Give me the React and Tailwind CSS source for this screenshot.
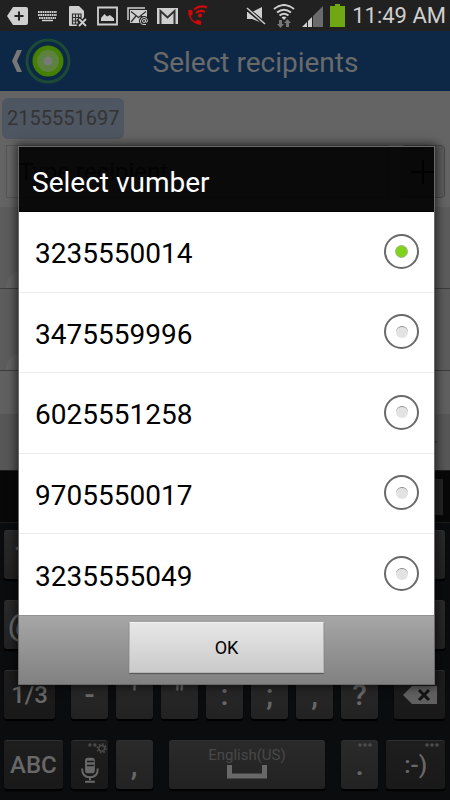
import { useState } from "react";

const numbers = ["3235550014", "3475559996", "6025551258", "9705550017", "3235555049"];

function StatusBar() {
  return (
    <div className="flex h-[31px] shrink-0 items-center justify-between bg-[#212121] pl-[7px] pr-1 text-[#cfcfcf]">
      <div className="flex items-center gap-[9px]">
        <svg className="h-5 w-[21px]" viewBox="0 0 21 20">
          <path d="M0 10 L6 1 H19 Q21 1 21 3 V17 Q21 19 19 19 H6 Z" fill="currentColor" />
          <path d="M12 5.500V14.500M7.500 10H16.500" stroke="#212121" strokeWidth="2" />
        </svg>
        <svg className="h-5 w-[21px]" viewBox="0 0 21 20" stroke="currentColor" strokeWidth="2">
          <path d="M1 6H20M1 9H20" strokeDasharray="1.700 0.600" />
          <path d="M2 12H19" strokeDasharray="1.700 0.600" />
          <path d="M5 14.500H16" strokeWidth="1.500" />
        </svg>
        <svg className="h-[22px] w-[21px]" viewBox="0 0 21 22">
          <path d="M3 1H12L17 6V12L13 21H3Q2 21 2 20V2Q2 1 3 1Z" fill="currentColor" />
          <path d="M5.500 9H14V19H5.500ZM5.500 12.500H14M5.500 16H14M8.500 9V19M11.500 9V19" fill="none" stroke="#303030" strokeWidth="1.200" />
          <path d="M11 13.500L19 21.500M19 13.500L11 21.500" stroke="#212121" strokeWidth="4.500" />
          <path d="M12 14L19 21M19 14L12 21" stroke="currentColor" strokeWidth="1.800" />
        </svg>
        <svg className="h-5 w-[21px]" viewBox="0 0 21 20">
          <path d="M1 1.500H20V18.500H1Z" fill="none" stroke="currentColor" strokeWidth="1.800" />
          <path d="M4 15V12L7.500 8L10 10.500L13 9L17 12.500V15Z" fill="currentColor" />
        </svg>
        <svg className="h-5 w-[21px]" viewBox="0 0 21 20">
          <path d="M1 14V2H18" fill="none" stroke="currentColor" strokeWidth="1.500" />
          <path d="M3 4H20V17H3Z" fill="currentColor" />
          <path d="M4 5.500L11.500 11.500L19 5.500M4 16L9 10M14 10L19 16" fill="none" stroke="#303030" strokeWidth="1.300" />
          <circle cx="17" cy="15" r="5" fill="#212121" />
          <circle cx="17" cy="15" r="1.500" fill="none" stroke="currentColor" />
          <path d="M18.500 13.500V16Q20.500 17 20.500 14.500Q20 11.500 17 11.500T13.500 15T17 18.500H19" fill="none" stroke="currentColor" />
        </svg>
        <svg className="h-5 w-[21px]" viewBox="0 0 21 20">
          <path d="M0 2H21V18H0Z" fill="currentColor" />
          <path d="M3.500 18V5L10.500 11.500L17.500 5V18" fill="none" stroke="#333" strokeWidth="2" />
        </svg>
        <svg className="h-[22px] w-[21px]" viewBox="0 0 21 22">
          <path
            transform="translate(-2 3) rotate(6 10 12) scale(0.78)"
            d="M6.620 10.790c1.440 2.830 3.760 5.140 6.590 6.590l2.200-2.200c.27-.27.67-.36 1.020-.24 1.120.37 2.330.57 3.570.57.55 0 1 .45 1 1V20c0 .55-.45 1-1 1-9.390 0-17-7.610-17-17 0-.55.45-1 1-1h3.500c.55 0 1 .45 1 1 0 1.250.2 2.450.57 3.570.11.35.03.74-.25 1.020l-2.200 2.200z"
            fill="#cf0808"
          />
          <path d="M7 4.500Q13 -0.500 20 2.500M9 8Q13 4.500 18 7" fill="none" stroke="#cf0808" strokeWidth="2.200" />
          <circle cx="13" cy="10.500" r="2" fill="#cf0808" />
        </svg>
      </div>
      <div className="flex items-center gap-[7px]">
        <svg className="h-6 w-5" viewBox="0 0 20 24">
          <path d="M1 8H6L16 3V19L6 15H1Z" fill="currentColor" />
          <path d="M0 4L19 20" stroke="#212121" strokeWidth="4" />
          <path d="M1 4L19 20" stroke="currentColor" strokeWidth="1.500" />
        </svg>
        <svg className="h-6 w-[22px]" viewBox="0 0 22 24">
          <g fill="none" stroke="currentColor" strokeWidth="2">
            <path d="M1 5Q11 -3 21 5" />
            <path d="M4 8.500Q11 3 18 8.500" />
            <path d="M6.500 11.500Q11 8 15.500 11.500" />
          </g>
          <path d="M8.500 13.500Q11 11.500 13.500 13.500L11 16Z" fill="currentColor" />
          <path d="M6 16H9V20H11L7.500 24L4 20H6ZM13 23H16V19H18L14.500 15L11 19H13Z" fill="#777" />
        </svg>
        <svg className="h-[22px] w-[21px]" viewBox="0 0 21 22">
          <path d="M0 22L10 12V22Z" fill="currentColor" />
          <path d="M10 12L21 1V22H10Z" fill="#6b6b6b" />
          <path d="M5.500 14V22M10.500 10V22" stroke="#212121" />
        </svg>
        <svg className="h-[23px] w-[15px]" viewBox="0 0 15 23">
          <path d="M5 0H10V2H15V23H0V2H5Z" fill="#70a814" />
        </svg>
        <span className="whitespace-nowrap text-[22px] leading-7">11:49 AM</span>
      </div>
    </div>
  );
}

function Header() {
  return (
    <header className="flex h-[60px] shrink-0 items-center border-b border-[#062448] bg-[#0d2846] pl-3 pr-[22px]">
      <button type="button" aria-label="Back" className="flex items-center gap-[3px]">
        <svg className="h-[22px] w-[10px]" viewBox="0 0 10 22">
          <path d="M5 0H10L5 11L10 22H5L0 11Z" fill="#777" />
        </svg>
        <svg className="h-[46px] w-[46px]" viewBox="0 0 46 46">
          <circle cx="23" cy="23" r="21" fill="none" stroke="#1d4937" strokeWidth="3" />
          <circle cx="23" cy="23" r="15.500" fill="#458000" />
          <circle cx="23" cy="23" r="11" fill="#5d8240" />
          <circle cx="23" cy="23" r="4.500" fill="#777b77" />
        </svg>
      </button>
      <h1 className="flex-1 pl-3 pt-1 text-center text-[28px] leading-8 text-[#6a6a6a]">Select recipients</h1>
    </header>
  );
}

function ContactRow() {
  return (
    <div className="flex h-[82px] items-end border-b border-[#3d3d3d] bg-[#5c5c5c] pl-1.5">
      <div className="h-[18px] w-[18px] rounded-tl-full bg-[#636363]" />
    </div>
  );
}

function Compose() {
  return (
    <main className="flex flex-1 flex-col bg-[#646464]">
      <div className="px-0.5 pt-[7px]">
        <span className="inline-block h-[41px] rounded-md bg-[#4e5661] px-[5px] pt-2 text-[20px] leading-6 text-[#343434]">
          2155551697
        </span>
      </div>
      <div className="mt-1.5 flex h-[54px] gap-3 pl-1.5 pr-[5px]">
        <input
          aria-label="Recipient"
          placeholder="Type recipient"
          className="h-[53px] min-w-0 flex-1 border border-[#555] bg-[#666] px-3 text-[24px] placeholder:text-[#222]"
        />
        <button
          type="button"
          aria-label="Add recipient"
          className="flex h-[53px] w-11 items-center justify-center rounded-sm border border-[#494949] bg-[#5c5c5c]"
        >
          <svg className="h-6 w-6" viewBox="0 0 24 24" stroke="#111" strokeWidth="2">
            <path d="M12 0V24M0 12H24" />
          </svg>
        </button>
      </div>
      <div className="mt-2">
        <ContactRow />
        <ContactRow />
      </div>
      <div className="h-[43px] bg-[#606060]" />
      <div className="flex flex-1 items-center justify-end bg-[#575757] pr-3">
        <svg className="h-1 w-3" viewBox="0 0 12 4">
          <path d="M0 0L12 2L0 4Z" fill="#111" />
        </svg>
      </div>
    </main>
  );
}

function Key({ className = "flex-[37_1_0%] from-[#2a2a2a] to-[#222]", label, children }) {
  return (
    <button
      type="button"
      aria-label={label}
      className={`relative flex h-[49px] min-w-0 items-center justify-center rounded-[3px] border-t border-[#303030] bg-linear-to-b text-[24px] leading-6 font-medium text-[#686868] shadow-[0_2px_1px_#000] ${className}`}
    >
      {children}
    </button>
  );
}

function Dots() {
  return (
    <svg className="absolute right-[5px] top-[2px] h-1 w-4" viewBox="0 0 16 4" fill="#4d4d4d">
      <circle cx="3" cy="2" r="1.800" />
      <circle cx="8" cy="2" r="1.800" />
      <circle cx="13" cy="2" r="1.800" />
    </svg>
  );
}

// the dialog covers all but the outer keys of a ten-key row
function CoveredRow({ first, rest }) {
  return (
    <div className="flex gap-2">
      <Key>
        <span className="text-[32px] leading-8">{first}</span>
      </Key>
      {rest.map((k) => (
        <Key key={k} label={k} />
      ))}
    </div>
  );
}

function Keyboard() {
  return (
    <div className="shrink-0 bg-[#0b0c0e] pb-[11px]">
      <div className="flex h-[53px] items-center justify-end border-y border-[#1c1c1c] bg-[#080808] pr-[7px]">
        <div className="h-9 w-11 bg-[#242424]" />
      </div>
      <div className="flex flex-col gap-[21px] pl-1 pr-[5px] pt-[7px]">
        <CoveredRow first="1" rest={["2", "3", "4", "5", "6", "7", "8", "9", "0"]} />
        <CoveredRow first="@" rest={["#", "$", "%", "&", "*", "(", ")", "+", "="]} />
        <div className="flex gap-2">
          <Key className="mr-2 flex-[51_1_0%] from-[#1e1e1e] to-[#191919]">1/3</Key>
          {["-", "'", '"', ":", ";", ",", "?"].map((k) => (
            <Key key={k}>
              <span className="text-[30px] leading-8">{k}</span>
            </Key>
          ))}
          <Key className="ml-2 flex-[51_1_0%] from-[#1e1e1e] to-[#191919]" label="Delete">
            <svg className="h-[18px] w-[34px]" viewBox="0 0 34 18">
              <path d="M0 9L9 0H34V18H9Z" fill="#606060" />
              <path d="M16 4L26 14M26 4L16 14" stroke="#141414" strokeWidth="3" />
            </svg>
          </Key>
        </div>
        <div className="flex gap-2">
          <Key className="flex-[59_1_0%] from-[#1e1e1e] to-[#191919]">ABC</Key>
          <Key className="flex-[37_1_0%] from-[#1e1e1e] to-[#191919]" label="Voice input">
            <svg className="h-full w-full" viewBox="0 0 37 49">
              <g fill="#4a4a4a">
                <circle cx="19" cy="4" r="1.800" />
                <circle cx="24" cy="4" r="1.800" />
              </g>
              <circle cx="31" cy="7.500" r="3" fill="none" stroke="#4a4a4a" strokeWidth="1.500" />
              <circle cx="31" cy="7.500" r="4.500" fill="none" stroke="#4a4a4a" strokeWidth="1.500" strokeDasharray="1.800 1.700" />
              <rect x="14" y="17" width="10" height="16" rx="3" fill="#686868" />
              <path d="M16 21H23M16 25H23" stroke="#1a1a1a" strokeWidth="1.500" />
              <path d="M11 28Q11 37 19 37T27 28" fill="none" stroke="#686868" strokeWidth="2" />
              <path d="M19 37V40M14 41.500H24" stroke="#686868" strokeWidth="2" />
            </svg>
          </Key>
          <Key>
            <span className="text-[30px] leading-8">,</span>
          </Key>
          <Key className="mx-2 flex-[157_1_0%] flex-col from-[#2a2a2a] to-[#222] pb-1.5" label="Space">
            <span className="text-[15px] leading-5 font-normal text-[#484848]">English(US)</span>
            <svg className="h-[14px] w-10" viewBox="0 0 40 14">
              <path d="M2.500 0V11H37.500V0" fill="none" stroke="#686868" strokeWidth="5" />
            </svg>
          </Key>
          <Key>
            <Dots />
            <span className="text-[30px] leading-8">.</span>
          </Key>
          <Key className="flex-[59_1_0%] from-[#1e1e1e] to-[#191919]">
            <Dots />
            :-)
          </Key>
        </div>
      </div>
    </div>
  );
}

function NumberDialog() {
  const [selected, setSelected] = useState(numbers[0]);

  return (
    <div className="absolute inset-x-0 bottom-0 top-[31px] flex items-center pl-[18px] pr-[15px]">
      <div
        role="dialog"
        aria-labelledby="dialog-title"
        className="w-full border border-[#696969] shadow-[0_0_9px_2px_rgba(0,0,0,0.6)]"
      >
        <h2 id="dialog-title" className="border-b border-black bg-black/90 px-[13px] pb-3 pt-5 text-[28px] leading-8 text-white">
          Select vumber
        </h2>
        <div className="bg-white">
          {numbers.map((number) => (
            <label
              key={number}
              className="flex h-[81px] items-center justify-between border-b border-[#ececec] pl-4 pr-[15px] text-[28px] text-black last:border-b-0 even:h-20"
            >
              <span className="pt-1">{number}</span>
              <input
                type="radio"
                name="number"
                value={number}
                checked={selected === number}
                onChange={() => setSelected(number)}
                className="mb-0.5 flex h-[35px] w-[35px] appearance-none items-center justify-center rounded-full border-2 border-[#6a6a6a] before:h-3 before:w-3 before:rounded-full before:border-t before:border-[#888] before:bg-[#e3e3e3] checked:before:h-[13px] checked:before:w-[13px] checked:before:border checked:before:border-[#a5b890] checked:before:bg-[#80d21a]"
              />
            </label>
          ))}
        </div>
        <div className="flex justify-center border-t border-[#929292] bg-linear-to-b from-[#a6a6a6] to-[#818181] pb-[11px] pt-1.5">
          <button
            type="button"
            className="h-[51px] w-[47%] rounded-[1px] border border-t-[#f0f0f0] border-[#b5b5b5] bg-linear-to-b from-[#e7e7e7] to-[#cacaca] text-[18px] text-black shadow-[0_1px_1px_#555]"
          >
            OK
          </button>
        </div>
      </div>
    </div>
  );
}

export default function App() {
  return (
    <div className="relative flex min-h-dvh flex-col overflow-hidden bg-black font-[Roboto,sans-serif]">
      <StatusBar />
      <Header />
      <Compose />
      <Keyboard />
      <NumberDialog />
    </div>
  );
}
